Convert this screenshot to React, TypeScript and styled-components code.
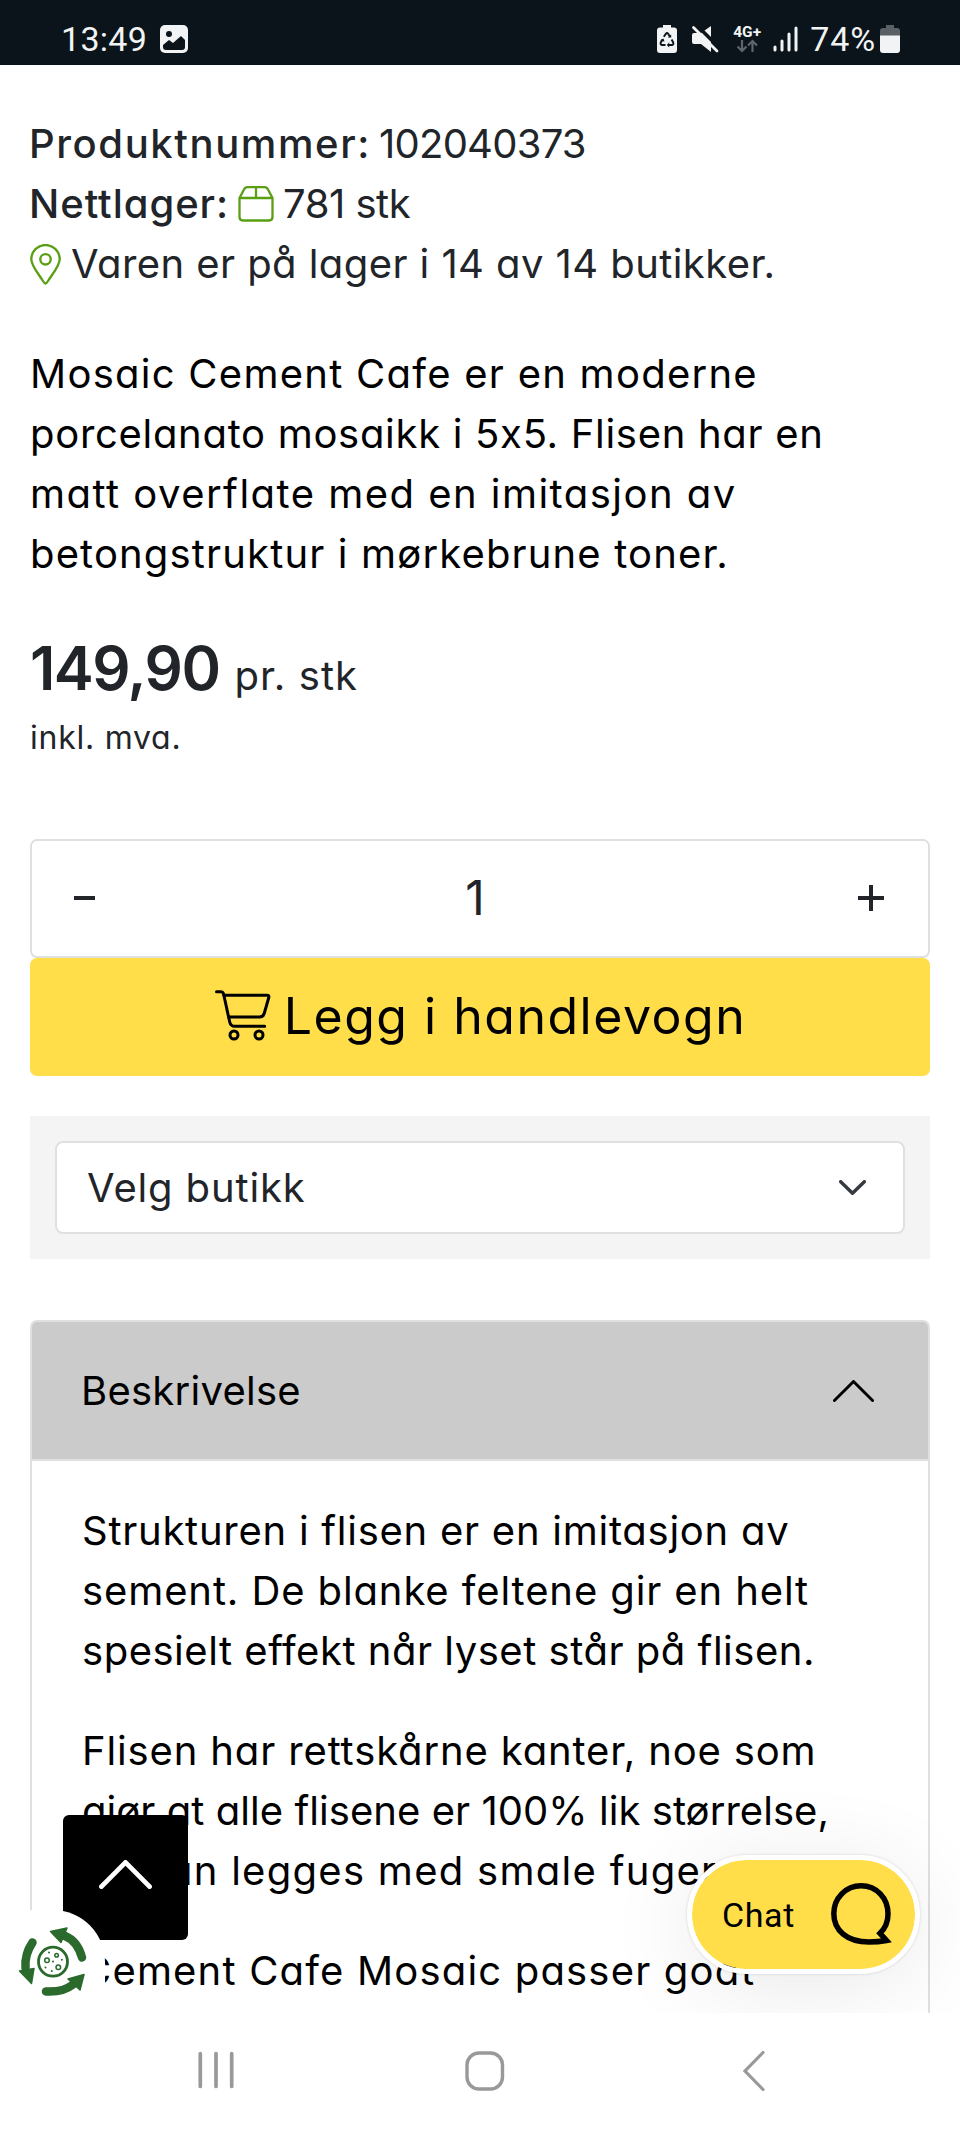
import React from "react";
import styled, { createGlobalStyle } from "styled-components";

const GlobalStyle = createGlobalStyle`
  *, *::before, *::after { box-sizing: border-box; }
  body { margin: 0; background: #fff; }
  button { font: inherit; color: inherit; background: none; border: 0; padding: 0; }
  svg { display: block; flex: none; }
`;

const ink = "#212529";
const line = "#dee0e2";
const yellow = "#ffde4a";
const green = "#5a9e14";

const Screen = styled.div`
  position: relative;
  display: flex;
  flex-direction: column;
  width: 960px;
  height: 2133px;
  overflow: hidden;
  background: #fff;
  color: ${ink};
  font-family: Inter, sans-serif;
  font-feature-settings: "cv11", "calt" 0;
  font-size: 40px;
  line-height: 60px;
`;

/* Status bar */

const StatusBar = styled.header`
  flex: none;
  display: flex;
  align-items: center;
  height: 65px;
  padding: 13px 60px 0 61px;
  background: #0b141a;
  color: #f1f3f4;
  font-family: Roboto, sans-serif;
  font-size: 34px;
  line-height: 52px;
`;

const Clock = styled.span`
  letter-spacing: 0.3px;
  margin-right: 13px;
`;

const StatusIcons = styled.div`
  display: flex;
  align-items: center;
  margin-left: auto;
`;

const Mute = styled.span`
  margin-left: 14px;
`;

const Network = styled.div`
  display: flex;
  flex-direction: column;
  align-items: center;
  width: 32px;
  margin: 0 10px 0 12px;
  font-size: 15.5px;
  font-weight: 700;
  line-height: 14px;
`;

const BatteryText = styled.span`
  margin: 0 4px 0 12px;
  letter-spacing: 0.9px;
`;

/* Page content */

const Main = styled.main`
  flex: 1;
  min-height: 0;
  overflow: hidden;
  padding: 49px 30px 0;
`;

const TextLine = styled.span<{ $tracking: number }>`
  display: block;
  white-space: nowrap;
  letter-spacing: ${(p) => p.$tracking}px;
`;

const InfoRow = styled.div<{ $gap: number }>`
  display: flex;
  align-items: center;
  gap: ${(p) => p.$gap}px;
  height: 60px;
`;

const Label = styled.strong<{ $tracking: number }>`
  margin-left: -1px;
  font-weight: 500;
  letter-spacing: ${(p) => p.$tracking}px;
`;

const Intro = styled.p`
  margin: 50px 0 0;
  color: #000;
`;

const PriceRow = styled.div`
  display: flex;
  align-items: baseline;
  gap: 15px;
  height: 72px;
  margin-top: 48px;
  line-height: 72px;
`;

const Price = styled.span`
  font-size: 60px;
  font-weight: 600;
  letter-spacing: -1.5px;
`;

const Vat = styled.div`
  margin-top: 10px;
  font-size: 32px;
  line-height: 48px;
  letter-spacing: 0.75px;
`;

const Quantity = styled.div`
  display: grid;
  grid-template-columns: 105px 1fr 115px;
  height: 119px;
  margin-top: 77px;
  border: 2px solid ${line};
  border-radius: 7px;
`;

const StepButton = styled.button`
  display: flex;
  align-items: center;
  justify-content: center;
  padding-bottom: 2px;
`;

const Amount = styled.span`
  display: flex;
  align-items: center;
  justify-content: center;
  padding-bottom: 1px;
  font-size: 48px;
`;

const CartButton = styled.button`
  display: flex;
  align-items: center;
  justify-content: center;
  gap: 13px;
  width: 100%;
  height: 118px;
  padding: 0 0 3px 1px;
  border-radius: 7px;
  background: ${yellow};
  color: #000;
  font-size: 50px;
  letter-spacing: 1.5px;
`;

const StorePanel = styled.div`
  margin-top: 40px;
  padding: 25px;
  background: #f4f4f4;
`;

const StoreSelect = styled.button`
  display: flex;
  align-items: center;
  justify-content: space-between;
  width: 100%;
  height: 93px;
  padding: 0 37px 0 30px;
  border: 2px solid ${line};
  border-radius: 8px;
  background: #fff;
  letter-spacing: 0.85px;
`;

const Accordion = styled.section`
  height: 800px;
  margin-top: 61px;
  border: 2px solid ${line};
  border-radius: 7px 7px 0 0;
  color: #000;
`;

const AccordionHeader = styled.button`
  display: flex;
  align-items: center;
  justify-content: space-between;
  width: 100%;
  height: 139px;
  padding: 0 54px 0 49px;
  border-bottom: 2px solid ${line};
  border-radius: 5px 5px 0 0;
  background: #cbcbcb;
  letter-spacing: 0.25px;
`;

const AccordionBody = styled.div`
  display: flex;
  flex-direction: column;
  gap: 40px;
  padding: 40px 0 0 50px;
`;

const Paragraph = styled.p`
  margin: 0;
`;

/* Floating controls */

const ScrollTop = styled.button`
  position: absolute;
  left: 62.5px;
  top: 1815px;
  display: flex;
  align-items: center;
  justify-content: center;
  width: 125px;
  height: 125px;
  padding-bottom: 7px;
  border-radius: 6px;
  background: #000;
`;

const CookieBadge = styled.button`
  position: absolute;
  left: 0;
  top: 1910px;
  display: flex;
  padding: 14px 14px 14px 15px;
  border-radius: 0 52px 0 0;
  background: #fff;
`;

const FloatLayer = styled.div`
  position: absolute;
  left: 0;
  top: 65px;
  width: 960px;
  height: 1948px;
  overflow: hidden;
  pointer-events: none;
`;

const ChatPill = styled.button`
  position: absolute;
  left: 687px;
  top: 1790px;
  display: flex;
  align-items: center;
  justify-content: space-between;
  width: 233px;
  height: 119px;
  padding: 0 21px 0 30px;
  border: 5px solid #fff;
  border-radius: 60px;
  background: ${yellow};
  background-clip: padding-box;
  box-shadow: 0 0 3px rgba(0, 0, 0, 0.16), 0 12px 90px rgba(0, 0, 0, 0.09);
  color: #000;
  font-family: Roboto, sans-serif;
  font-size: 34px;
  letter-spacing: 0.6px;
`;

const NavBar = styled.nav`
  flex: none;
  display: flex;
  align-items: flex-start;
  height: 120px;
  padding: 38px 0 0 197px;
  background: #fff;
`;

const HomeButton = styled.span`
  margin: 0 238px 0 230px;
`;

/* Icons */

const PictureIcon = () => (
  <svg width="28" height="28" viewBox="0 0 28 28">
    <rect width="28" height="28" rx="5" fill="#f1f3f4" />
    <circle cx="9" cy="9" r="3" fill="#0b141a" />
    <path d="M3 20l6-5 4 3 8-7 4 4v7q0 3-3 3H6q-3 0-3-3z" fill="#0b141a" />
  </svg>
);

const RecycleBatteryIcon = () => (
  <svg width="20" height="28" viewBox="0 0 20 28">
    <path d="M6 0h8v2.500h3q3 0 3 3V25q0 3-3 3H3q-3 0-3-3V5.500q0-3 3-3h3z" fill="#f1f3f4" />
    <path
      d="M6.800 11.800l2.200-3.200q1-1.300 2 0l1.800 3M14.600 14.500l1.700 3.200q.5 2-1.300 2.300h-3.500M8.500 20H5q-1.800-.3-1.300-2.300l1.800-3.200"
      fill="none"
      stroke="#0b141a"
      strokeWidth="1.900"
    />
    <path d="M10.800 12.600h3.400V9.400zM12.200 17.600v4.800L9.800 20zM3.300 15.200l3.200-1.800 1 3.400z" fill="#0b141a" />
  </svg>
);

const MuteIcon = () => (
  <svg width="28" height="28" viewBox="0 0 28 28">
    <path d="M1 10q0-2 2-2h7l10-7v26l-10-8H3q-2 0-2-2z" fill="#f1f3f4" />
    <path d="M5-.5l23 23" stroke="#0b141a" strokeWidth="3.500" />
    <path d="M2.500 2.500L26 26" stroke="#f1f3f4" strokeWidth="2.800" strokeLinecap="round" />
  </svg>
);

const DataArrows = () => (
  <svg width="22" height="14" viewBox="0 0 22 14" fill="none" stroke="#5f656a" strokeWidth="2.200">
    <path d="M6 1v11M1.500 7.500L6 12l4.500-4.500M16.500 13V2M12 6.500L16.500 2 21 6.500" />
  </svg>
);

const SignalIcon = () => (
  <svg width="25" height="26" viewBox="0 0 25 26" stroke="#f1f3f4" strokeWidth="3" strokeLinecap="round">
    <path d="M2 21v3M9 15v9M16 8v16M23 2v22" />
  </svg>
);

const BatteryIcon = () => (
  <svg width="20" height="28" viewBox="0 0 20 28">
    <path d="M6 0h8v3h3q3 0 3 3v5H0V6q0-3 3-3h3z" fill="#5b5f66" />
    <path d="M0 10.500h20V25q0 3-3 3H3q-3 0-3-3z" fill="#f1f3f4" />
  </svg>
);

const BoxIcon = () => (
  <svg width="36" height="36" viewBox="0 0 36 36" fill="none" stroke={green} strokeWidth="2.300" strokeLinejoin="round">
    <path d="M1.500 12L6 3.500Q7 1.200 9.500 1.200h17Q29 1.200 30 3.500L34.500 12v19q0 3.500-3.500 3.500H5q-3.500 0-3.500-3.500zM1.500 12h33M18 1.200V12" />
  </svg>
);

const PinIcon = () => (
  <svg width="31" height="41" viewBox="0 0 31 41" fill="none" stroke={green} strokeWidth="2.300" strokeLinejoin="round">
    <path d="M15.500 39.500Q14.500 39.500 13 37C7.500 28.500 1.300 21.500 1.300 15.200a14.200 14.200 0 0 1 28.400 0c0 6.300-6.200 13.300-11.700 21.800q-1.500 2.500-2.500 2.500z" />
    <circle cx="15.500" cy="15.300" r="5.200" />
  </svg>
);

const CartIcon = () => (
  <svg
    width="56"
    height="52"
    viewBox="0 0 56 52"
    fill="none"
    stroke="#000"
    strokeWidth="3"
    strokeLinecap="round"
    strokeLinejoin="round"
  >
    <path d="M1.500 1.800h4q2.700 0 3.200 2.700l6 27.500q1 4.300 5 4.300h30" />
    <path d="M9 5.200h43q2.300 0 1.800 2.300l-4.600 16q-1 3.500-4.500 3.500H14" />
    <circle cx="19" cy="45" r="4" />
    <circle cx="44" cy="45" r="4" />
  </svg>
);

const Chevron = ({ w, h, weight, color, down }: { w: number; h: number; weight: number; color: string; down?: boolean }) => {
  const p = weight / 2;
  const d = down
    ? `M${p} ${p}L${w / 2} ${h - p}L${w - p} ${p}`
    : `M${p} ${h - p}L${w / 2} ${p}L${w - p} ${h - p}`;
  return (
    <svg width={w} height={h} viewBox={`0 0 ${w} ${h}`} fill="none">
      <path d={d} stroke={color} strokeWidth={weight} strokeLinecap="round" strokeLinejoin="round" />
    </svg>
  );
};

const CookieIcon = () => (
  <svg width="76" height="76" viewBox="0 0 76 76" fill="none" stroke="#2a6a2d">
    <g strokeWidth="8.500" strokeLinecap="round">
      <path d="M67 33.500Q62.500 17 50 12" />
      <path d="M17.500 18.500Q9.500 30 10.500 44" />
      <path d="M31 67.500Q48 68.500 58 60.500" />
    </g>
    <g fill="#2a6a2d" strokeWidth="1.500" strokeLinejoin="round">
      <path d="M35.500 7.500L52 4L46 18.500z" />
      <path d="M4.500 47L19 44.500L16.500 59.500z" />
      <path d="M69 50.500L65 66L53 55z" />
    </g>
    <circle cx="38" cy="37.700" r="14.500" strokeWidth="2.800" />
    <g strokeWidth="1.500">
      <circle cx="32" cy="36.300" r="2.300" />
      <circle cx="41.600" cy="31.300" r="1.800" />
      <circle cx="43.300" cy="43.300" r="2.300" />
    </g>
    <g fill="#2a6a2d" stroke="none">
      <circle cx="34" cy="28.500" r="1" />
      <circle cx="38" cy="37.500" r="1" />
      <circle cx="46.800" cy="35.800" r="1" />
      <circle cx="30.500" cy="43.500" r="1" />
      <circle cx="36.800" cy="47" r="1" />
    </g>
  </svg>
);

const ChatIcon = () => (
  <svg width="63" height="63" viewBox="0 0 63 63" fill="none">
    <path
      d="M30 2.800C45.500 2.800 57 15 57 31C57 38.500 54.500 45 49 50.300L55.500 57.500C49 58.700 44 59 38 59C16 59 2.800 47.500 2.800 30.500C2.800 15 15 2.800 30 2.800Z"
      stroke="#000"
      strokeWidth="5.500"
    />
  </svg>
);

const RecentsIcon = () => (
  <svg width="38" height="38" viewBox="0 0 38 38" stroke="#999" strokeWidth="3.700" strokeLinecap="round">
    <path d="M3.300 2.500v33M19 2.500v33M34.700 2.500v33" />
  </svg>
);

const HomeIcon = () => (
  <svg width="40" height="40" viewBox="0 0 40 40">
    <rect x="2" y="2" width="35.500" height="36" rx="12" fill="none" stroke="#999" strokeWidth="3.400" />
  </svg>
);

const BackIcon = () => (
  <svg width="22" height="40" viewBox="0 0 22 40">
    <path d="M20 1.500L2 20l18 18.500" fill="none" stroke="#999" strokeWidth="3.200" strokeLinecap="round" />
  </svg>
);

/* Copy, one entry per printed line with its tracking */

type Copy = [text: string, tracking: number][];

const intro: Copy = [
  ["Mosaic Cement Cafe er en moderne", 1.26],
  ["porcelanato mosaikk i 5x5. Flisen har en", 0.7],
  ["matt overflate med en imitasjon av", 1.47],
  ["betongstruktur i mørkebrune toner.", 1.15],
];

const description: Copy[] = [
  [
    ["Strukturen i flisen er en imitasjon av", 0.74],
    ["sement. De blanke feltene gir en helt", 0.89],
    ["spesielt effekt når lyset står på flisen.", 0.52],
  ],
  [
    ["Flisen har rettskårne kanter, noe som", 0.86],
    ["gjør at alle flisene er 100% lik størrelse,", 0.05],
    ["og kan legges med smale fuger.", 1.28],
  ],
  [["Cement Cafe Mosaic passer godt", 1.18]],
];

const Lines = ({ copy }: { copy: Copy }) => (
  <>
    {copy.map(([text, tracking]) => (
      <TextLine key={text} $tracking={tracking}>
        {text}
      </TextLine>
    ))}
  </>
);

export default function App() {
  return (
    <Screen>
      <GlobalStyle />
      <StatusBar>
        <Clock>13:49</Clock>
        <PictureIcon />
        <StatusIcons>
          <RecycleBatteryIcon />
          <Mute>
            <MuteIcon />
          </Mute>
          <Network>
            <span>4G+</span>
            <DataArrows />
          </Network>
          <SignalIcon />
          <BatteryText>74%</BatteryText>
          <BatteryIcon />
        </StatusIcons>
      </StatusBar>

      <Main>
        <div>
          <InfoRow $gap={8}>
            <Label $tracking={1.6}>Produktnummer:</Label>
            <TextLine $tracking={-0.75}>102040373</TextLine>
          </InfoRow>
          <InfoRow $gap={9}>
            <Label $tracking={0.95}>Nettlager:</Label>
            <BoxIcon />
            <TextLine $tracking={-0.5}>781 stk</TextLine>
          </InfoRow>
          <InfoRow $gap={10}>
            <PinIcon />
            <TextLine $tracking={0.43}>Varen er på lager i 14 av 14 butikker.</TextLine>
          </InfoRow>
        </div>

        <Intro>
          <Lines copy={intro} />
        </Intro>

        <PriceRow>
          <Price>149,90</Price>
          <TextLine $tracking={1.1}>pr. stk</TextLine>
        </PriceRow>
        <Vat>inkl. mva.</Vat>

        <Quantity>
          <StepButton aria-label="Færre">
            <svg width="21" height="4">
              <rect width="21" height="4" fill={ink} />
            </svg>
          </StepButton>
          <Amount>1</Amount>
          <StepButton aria-label="Flere">
            <svg width="26" height="26" stroke={ink} strokeWidth="4">
              <path d="M0 13h26M13 0v26" />
            </svg>
          </StepButton>
        </Quantity>
        <CartButton>
          <CartIcon />
          Legg i handlevogn
        </CartButton>

        <StorePanel>
          <StoreSelect>
            Velg butikk
            <Chevron w={27} h={15} weight={3.4} color="#343a40" down />
          </StoreSelect>
        </StorePanel>

        <Accordion>
          <AccordionHeader>
            Beskrivelse
            <Chevron w={41} h={22} weight={2.9} color="#000" />
          </AccordionHeader>
          <AccordionBody>
            {description.map((copy) => (
              <Paragraph key={copy[0][0]}>
                <Lines copy={copy} />
              </Paragraph>
            ))}
          </AccordionBody>
        </Accordion>
      </Main>

      <NavBar>
        <RecentsIcon />
        <HomeButton>
          <HomeIcon />
        </HomeButton>
        <BackIcon />
      </NavBar>

      <ScrollTop aria-label="Til toppen">
        <Chevron w={53} h={29} weight={4.8} color="#fff" />
      </ScrollTop>
      <FloatLayer>
        <ChatPill>
          Chat
          <ChatIcon />
        </ChatPill>
      </FloatLayer>
      <CookieBadge aria-label="Informasjonskapsler">
        <CookieIcon />
      </CookieBadge>
    </Screen>
  );
}
